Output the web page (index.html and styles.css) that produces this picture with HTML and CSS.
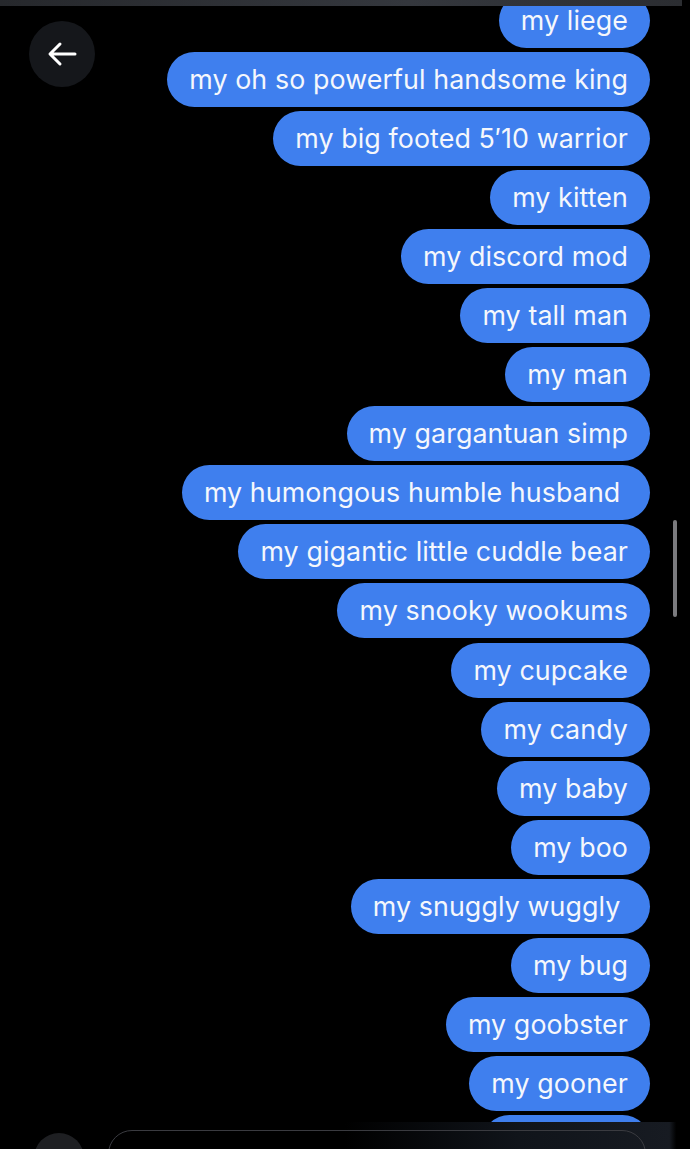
FILE: index.html
```html
<!DOCTYPE html>
<html>
<head>
  <title>Chat</title>
  <link rel="stylesheet" href="styles.css">
</head>
<body>
  <div class="screen">
    <div class="top-bar"></div>

    <button class="back-btn" aria-label="Back">
      <svg width="30" height="26" viewBox="0 0 30 26">
        <path d="M28 13H4M13 3L3 13l10 10" fill="none" stroke="#fff" stroke-width="3" stroke-linecap="round" stroke-linejoin="round"/>
      </svg>
    </button>

    <div class="messages">
      <div class="bubble">my liege</div>
      <div class="bubble">my oh so powerful handsome king</div>
      <div class="bubble">my big footed 5′10 warrior</div>
      <div class="bubble">my kitten</div>
      <div class="bubble">my discord mod</div>
      <div class="bubble">my tall man</div>
      <div class="bubble">my man</div>
      <div class="bubble">my gargantuan simp</div>
      <div class="bubble">my humongous humble husband&nbsp;</div>
      <div class="bubble">my gigantic little cuddle bear</div>
      <div class="bubble">my snooky wookums</div>
      <div class="bubble">my cupcake</div>
      <div class="bubble">my candy</div>
      <div class="bubble">my baby</div>
      <div class="bubble">my boo</div>
      <div class="bubble">my snuggly wuggly&nbsp;</div>
      <div class="bubble">my bug</div>
      <div class="bubble">my goobster</div>
      <div class="bubble">my gooner</div>
      <div class="bubble">my honey</div>
    </div>

    <div class="scrollbar"></div>

    <div class="composer">
      <div class="composer-btn"></div>
      <div class="composer-input"></div>
    </div>
  </div>
</body>
</html>
```

FILE: styles.css
```css
html, body {
  margin: 0;
  padding: 0;
  background: #000;
}
body {
  font-family: Inter, "Liberation Sans", Arial, sans-serif;
  overflow: hidden;
}
.screen {
  position: relative;
  width: 690px;
  height: 1149px;
  overflow: hidden;
  background: #000;
}
.top-bar {
  position: absolute;
  top: 0;
  left: 0;
  width: 682px;
  height: 6px;
  background: linear-gradient(to right, #26282c, #34373d 60%, #2b2d31);
  z-index: 3;
}
.back-btn {
  position: absolute;
  top: 21px;
  left: 29px;
  width: 66px;
  height: 66px;
  border: none;
  border-radius: 50%;
  background: #15171b;
  display: flex;
  align-items: center;
  justify-content: center;
  padding: 0;
  z-index: 2;
}
.messages {
  display: flex;
  flex-direction: column;
  align-items: flex-end;
  gap: 4.1px;
  margin-top: -7.5px;
  padding-right: 40px;
}
.bubble {
  height: 55px;
  line-height: 55px;
  padding: 0 22px;
  border-radius: 28px;
  background: #3f7fee;
  color: #f5f7fc;
  font-size: 26.8px;
  letter-spacing: 0.1px;
  white-space: nowrap;
}
.scrollbar {
  position: absolute;
  top: 520px;
  left: 673px;
  width: 4px;
  height: 97px;
  border-radius: 2px;
  background: #7b7b7e;
}
.composer {
  position: absolute;
  left: 0;
  top: 1122px;
  width: 690px;
  height: 27px;
  background: linear-gradient(to right, #000 50%, #10141a 75%, #171b22 97%, #000 98%);
  z-index: 3;
}
.composer-btn {
  position: absolute;
  left: 34px;
  top: 11px;
  width: 50px;
  height: 50px;
  border-radius: 50%;
  background: #1e1f22;
}
.composer-input {
  position: absolute;
  left: 108px;
  top: 8px;
  width: 538px;
  height: 50px;
  border: 1.5px solid #3a3b40;
  border-radius: 24px;
  box-sizing: border-box;
}
```
